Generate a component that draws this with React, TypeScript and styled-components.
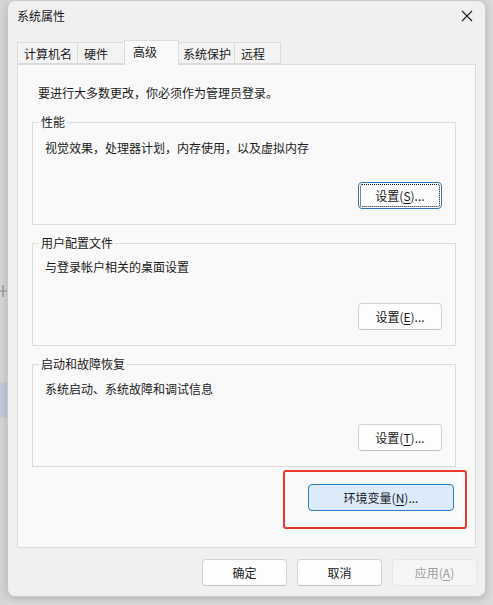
import React from "react";
import styled, { createGlobalStyle } from "styled-components";

const GlobalStyle = createGlobalStyle`
  html, body {
    margin: 0;
    padding: 0;
    background: #dcdcdc;
  }
  body {
    font-family: "Noto Sans CJK SC", "Noto Sans", sans-serif;
    font-size: 12px;
    color: #1b1b1b;
  }
`;

const Desktop = styled.div`
  display: flex;
  width: 493px;
  height: 605px;
  overflow: hidden;
  background: #dadada;
`;

const SideStrip = styled.div`
  width: 7px;
  display: flex;
  flex-direction: column;
  background: #d6d6d6;
`;

const PlusMark = () => (
  <svg width="7" height="14" viewBox="0 0 7 14" style={{ marginTop: 284 }}>
    <path d="M0 7 H7 M3 1 V13" stroke="#8c8c8c" strokeWidth="1.2" fill="none" />
  </svg>
);

const BlueBand = styled.div`
  margin-top: 84px;
  height: 36px;
  background: #c6cad8;
`;

const Window = styled.div`
  width: 479px;
  height: 597px;
  box-sizing: border-box;
  background: #f0f0f0;
  border: 1px solid #c9c9c9;
  border-radius: 8px;
  box-shadow: 0 2px 8px rgba(0, 0, 0, 0.18);
  display: flex;
  flex-direction: column;
`;

const TitleBar = styled.div`
  height: 29px;
  display: flex;
  align-items: center;
  justify-content: space-between;
  padding: 0 12px 0 9px;
`;

const Title = styled.span`
  line-height: 16px;
  color: #1a1a1a;
`;

const CloseIcon = () => (
  <svg width="12" height="12" viewBox="0 0 12 12">
    <path d="M1 1 L11 11 M11 1 L1 11" stroke="#1f1f1f" strokeWidth="1.1" fill="none" />
  </svg>
);

const TabStrip = styled.div`
  margin: 10px 0 0 9px;
  height: 24px;
  display: flex;
  align-items: flex-end;
`;

const Tab = styled.div<{ $w: number; $active?: boolean }>`
  position: relative;
  box-sizing: border-box;
  width: ${(p) => p.$w}px;
  height: ${(p) => (p.$active ? 25 : 22)}px;
  margin: ${(p) => (p.$active ? "0 -2px -1px -2px" : "0")};
  padding: 3px 0 0 ${(p) => (p.$active ? 8 : 6)}px;
  line-height: 16px;
  background: ${(p) => (p.$active ? "#f9f9f9" : "#f3f3f3")};
  border: 1px solid #dcdcdc;
  border-bottom: ${(p) => (p.$active ? "none" : "1px solid #dcdcdc")};
  border-left: ${(p) => (p.$active ? "1px solid #dcdcdc" : "none")};
  z-index: ${(p) => (p.$active ? 2 : 1)};
  color: #1a1a1a;
  &:first-child {
    border-left: 1px solid #dcdcdc;
  }
`;

const Panel = styled.div`
  margin-left: 9px;
  width: 459px;
  height: 484px;
  box-sizing: border-box;
  background: #f9f9f9;
  border: 1px solid #dcdcdc;
  padding: 20px 19px 0 14px;
  display: flex;
  flex-direction: column;
`;

const Intro = styled.div`
  padding-left: 6px;
  line-height: 16px;
  margin-bottom: 13px;
`;

const Group = styled.fieldset`
  margin: 0 0 10px 0;
  padding: 0 13px 15px 6px;
  border: 1px solid #dcdcdc;
  display: flex;
  flex-direction: column;
  min-width: 0;
`;

const Legend = styled.legend`
  padding: 0 2px;
  line-height: 16px;
  color: #1a1a1a;
`;

const Desc = styled.div<{ $top: number }>`
  margin-top: ${(p) => p.$top}px;
  padding-left: 6px;
  line-height: 16px;
  height: 16px;
`;

const Button = styled.button<{ $focus?: boolean; $disabled?: boolean }>`
  box-sizing: border-box;
  width: 84px;
  height: 27px;
  font: inherit;
  font-size: 12px;
  color: ${(p) => (p.$disabled ? "#9d9d9d" : "#1a1a1a")};
  background: ${(p) => (p.$disabled ? "#f5f5f5" : "#fdfdfd")};
  border: 1px solid ${(p) => (p.$focus ? "#2a74c0" : p.$disabled ? "#e6e6e6" : "#d2d2d2")};
  border-bottom-color: ${(p) => (p.$focus ? "#2a74c0" : p.$disabled ? "#e6e6e6" : "#c2c2c2")};
  border-radius: 4px;
  outline: ${(p) => (p.$focus ? "1px dotted #111" : "none")};
  outline-offset: -3px;
  padding: 0;
  line-height: 16px;
`;

const ButtonRow = styled.div<{ $top: number }>`
  margin-top: ${(p) => p.$top}px;
  display: flex;
  justify-content: flex-end;
`;

const Annotated = styled.div`
  margin: -7px -11px 0 0;
  align-self: flex-end;
  box-sizing: border-box;
  width: 184px;
  height: 59px;
  border: 2px solid #e83a33;
  border-radius: 3px;
  padding: 12px 11px 0 23px;
`;

const EnvButton = styled(Button)`
  width: 146px;
  height: 27px;
  background: #dcebfa;
  border: 1px solid #2f7ccb;
`;

const Footer = styled.div`
  margin: 11px 8px 0 0;
  display: flex;
  justify-content: flex-end;
  gap: 10px;
`;

const FooterButton = styled(Button)`
  width: 85px;
`;

const U = styled.span`
  text-decoration: underline;
  text-underline-offset: 2px;
`;

const groups = [
  { title: "性能", desc: "视觉效果，处理器计划，内存使用，以及虚拟内存", key: "S", top: 10, focus: true },
  { title: "用户配置文件", desc: "与登录帐户相关的桌面设置", key: "E", top: 8, focus: false },
  { title: "启动和故障恢复", desc: "系统启动、系统故障和调试信息", key: "T", top: 9, focus: false },
];

const tabs = [
  { label: "计算机名", w: 61 },
  { label: "硬件", w: 48 },
  { label: "高级", w: 55, active: true },
  { label: "系统保护", w: 58 },
  { label: "远程", w: 46 },
];

export default function App() {
  return (
    <>
      <GlobalStyle />
      <Desktop>
        <SideStrip>
          <PlusMark />
          <BlueBand />
        </SideStrip>
        <Window>
          <TitleBar>
            <Title>系统属性</Title>
            <CloseIcon />
          </TitleBar>
          <TabStrip>
            {tabs.map((t) => (
              <Tab key={t.label} $w={t.w} $active={t.active}>
                {t.label}
              </Tab>
            ))}
          </TabStrip>
          <Panel>
            <Intro>要进行大多数更改，你必须作为管理员登录。</Intro>
            {groups.map((g) => (
              <Group key={g.title}>
                <Legend>{g.title}</Legend>
                <Desc $top={g.top}>{g.desc}</Desc>
                <ButtonRow $top={36 - g.top}>
                  <Button $focus={g.focus}>
                    设置(<U>{g.key}</U>)...
                  </Button>
                </ButtonRow>
              </Group>
            ))}
            <Annotated>
              <EnvButton>
                环境变量(<U>N</U>)...
              </EnvButton>
            </Annotated>
          </Panel>
          <Footer>
            <FooterButton>确定</FooterButton>
            <FooterButton>取消</FooterButton>
            <FooterButton $disabled>
              应用(<U>A</U>)
            </FooterButton>
          </Footer>
        </Window>
      </Desktop>
    </>
  );
}
